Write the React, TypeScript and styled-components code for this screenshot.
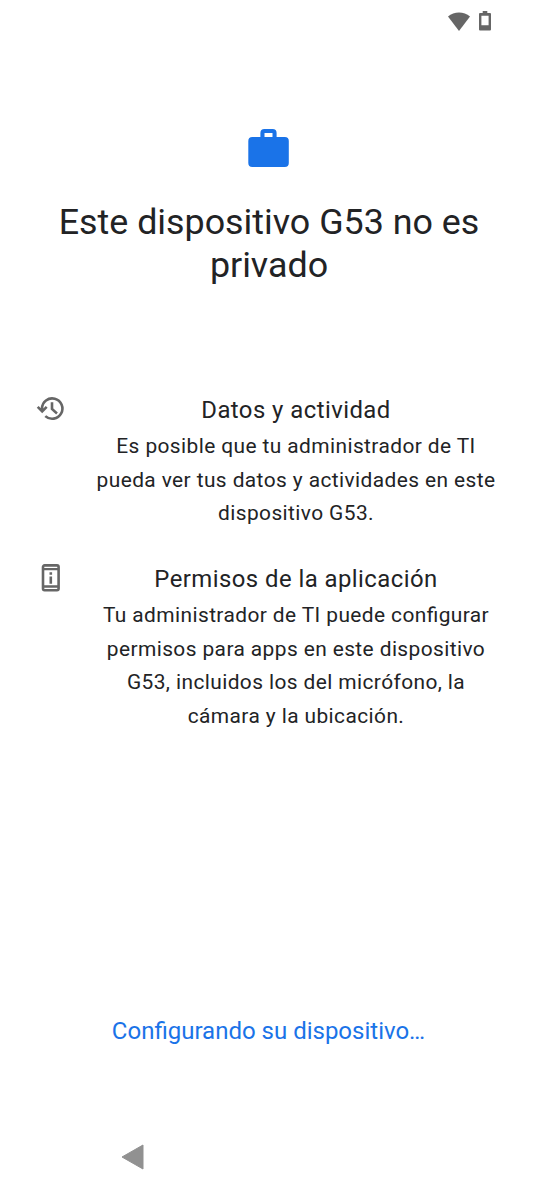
import React from "react";
import styled, { createGlobalStyle } from "styled-components";

const Global = createGlobalStyle`
  * { box-sizing: border-box; }
  body { margin: 0; background: #fff; font-family: Roboto, sans-serif; color: #222325; }
  h1, h2, p { margin: 0; font-weight: 400; }
  svg { display: block; }
`;
const Screen = styled.div`
  width: 537px; height: 1193px; display: flex; flex-direction: column; background: #fff; overflow: hidden;
`;
const StatusBar = styled.div`
  height: 42px; display: flex; justify-content: flex-end; align-items: center; gap: 9px; padding-right: 46px; color: #666;
`;
const Header = styled.header`
  height: 354px; padding-top: 87px; display: flex; flex-direction: column; align-items: center;
`;
const Title = styled.h1`
  margin-top: 34px; padding-left: 1px; font-size: 35.85px; line-height: 43px; text-align: center; white-space: nowrap;
`;
const Row = styled.section<{ $h: number }>`
  height: ${p => p.$h}px; display: flex; padding-left: 36px;
`;
const IconCell = styled.div`
  width: 60px; flex: none; color: #666;
`;
const Copy = styled.div`
  width: 400px; text-align: center; white-space: nowrap;
`;
const RowTitle = styled.h2`
  font-size: 23.9px; line-height: 29px; letter-spacing: 0.45px;
`;
const RowText = styled.p`
  margin-top: 5.4px; font-size: 20.9px; line-height: 33.5px; letter-spacing: 0.41px; font-feature-settings: "liga" 1;
`;
const Progress = styled.p`
  margin-top: 247px; text-align: center; color: #1a73e8; font-size: 24px; line-height: 30px;
`;
const NavBar = styled.nav`
  margin-top: auto; height: 72px; display: flex; align-items: center; padding-left: 121px;
`;

export default function App() {
  return (
    <Screen>
      <Global />
      <StatusBar>
        <svg width="22" height="19" viewBox="0 0 22 19"><path fill="currentColor" d="M0 4.5C6-.7 16-.7 22 4.5L11 19Z" /></svg>
        <svg width="12" height="20" viewBox="0 0 12 20"><path fill="currentColor" fillRule="evenodd" d="M3.7 0h4.6v2H11q1 0 1 1v15.5q0 1-1 1H1q-1 0-1-1V3q0-1 1-1h2.7zM2.4 4.7v9.6h7.2V4.7z" /></svg>
      </StatusBar>
      <Header>
        <svg width="41" height="38" viewBox="0 0 41 38"><path fill="#1a73e8" fillRule="evenodd" d="M12.4 8V4q0-4 4-4h8.2q4 0 4 4v4h8.2q4 0 4 4v22q0 4-4 4H4.3q-4 0-4-4V12q0-4 4-4zM16.5 4v4h8V4z" /></svg>
        <Title>Este dispositivo G53 no es<br />privado</Title>
      </Header>
      <Row $h={169}>
        <IconCell>
          <svg width="30" height="26" viewBox="0 0 30 26" fill="none" stroke="currentColor" strokeWidth="2.6"><path d="M6 14.5V12.5A10.2 10.2 0 1 1 9.3 20.1M1.7 10.8 6.2 15.3 10.7 10.8M16 6.3V13l5 4.4" /></svg>
        </IconCell>
        <Copy>
          <RowTitle>Datos y actividad</RowTitle>
          <RowText>Es posible que tu administrador de TI<br />pueda ver tus datos y actividades en este<br />dispositivo G53.</RowText>
        </Copy>
      </Row>
      <Row $h={204}>
        <IconCell>
          <svg width="30" height="28" viewBox="0 0 30 28" overflow="visible" fill="none" stroke="currentColor" strokeWidth="2.6"><rect x="7" y="0.4" width="15.6" height="24.8" rx="1.6" /><path d="M7 4.1h15.6M7 21.5h15.6" strokeWidth="2.4" /><path d="M14.8 7.3v2.4M14.8 11.4v7.4" strokeWidth="2.6" /></svg>
        </IconCell>
        <Copy>
          <RowTitle>Permisos de la aplicación</RowTitle>
          <RowText>Tu administrador de TI puede configurar<br />permisos para apps en este dispositivo<br />G53, incluidos los del micrófono, la<br />cámara y la ubicación.</RowText>
        </Copy>
      </Row>
      <Progress>Configurando su dispositivo…</Progress>
      <NavBar>
        <svg width="23" height="26" viewBox="0 0 23 26"><path fill="#919191" stroke="#919191" strokeLinejoin="round" d="M1 13 22 1v24z" /></svg>
      </NavBar>
    </Screen>
  );
}
